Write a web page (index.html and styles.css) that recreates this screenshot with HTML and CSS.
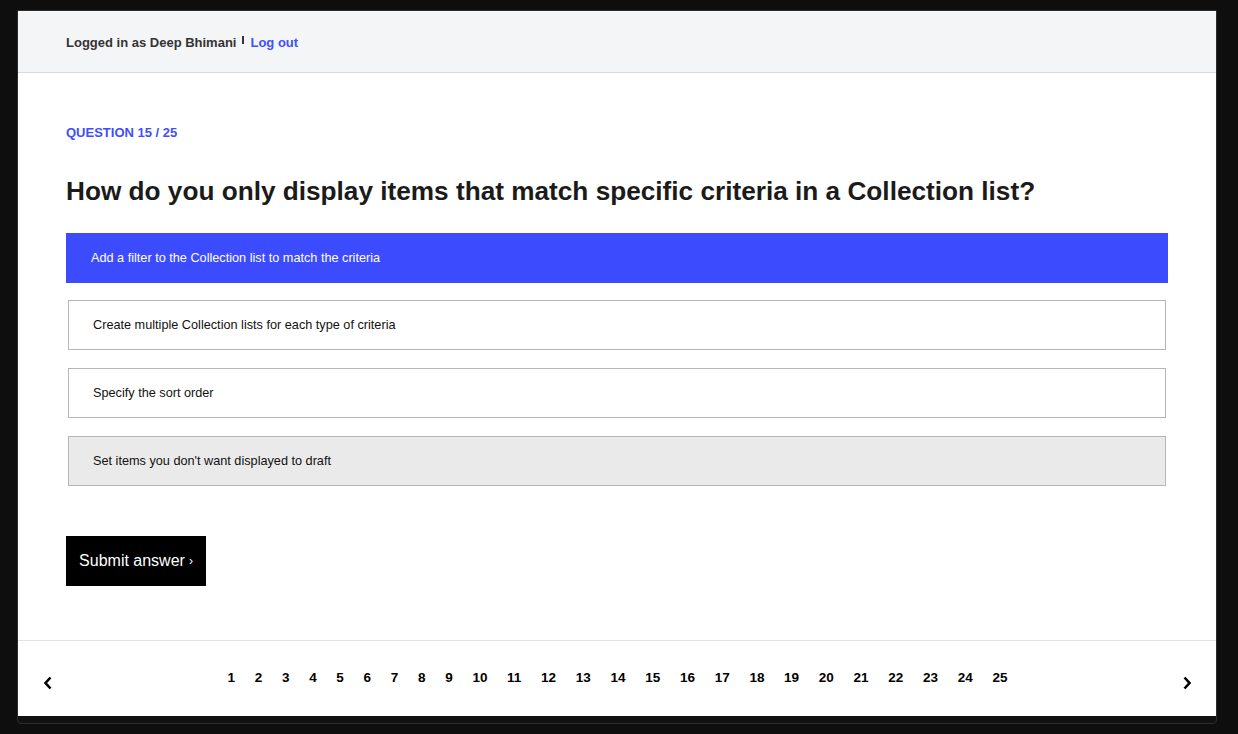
FILE: index.html
```html
<!DOCTYPE html>
<html>
<head>
<meta charset="utf-8">
<link rel="stylesheet" href="styles.css">
</head>
<body>
<div class="window">
  <header class="topbar">
    <span class="user">Logged in as Deep Bhimani</span>
    <span class="sep"></span>
    <a class="logout" href="#">Log out</a>
  </header>
  <main class="quiz">
    <div class="qlabel">QUESTION 15 / 25</div>
    <h1 class="qtitle">How do you only display items that match specific criteria in a Collection list?</h1>
    <div class="options">
      <div class="option selected">Add a filter to the Collection list to match the criteria</div>
      <div class="option">Create multiple Collection lists for each type of criteria</div>
      <div class="option">Specify the sort order</div>
      <div class="option hover">Set items you don't want displayed to draft</div>
    </div>
    <button class="submit">Submit answer <span class="chev">›</span></button>
  </main>
  <footer class="pager">
    <span class="arrow"><svg width="10" height="14" viewBox="0 0 10 14"><polyline points="7.5,1.5 2.5,7 7.5,12.5" fill="none" stroke="#000" stroke-width="2.6"/></svg></span>
    <div class="pages">
      <span>1</span><span>2</span><span>3</span><span>4</span><span>5</span><span>6</span><span>7</span><span>8</span><span>9</span><span>10</span><span>11</span><span>12</span><span>13</span><span>14</span><span>15</span><span>16</span><span>17</span><span>18</span><span>19</span><span>20</span><span>21</span><span>22</span><span>23</span><span>24</span><span>25</span>
    </div>
    <span class="arrow"><svg width="10" height="14" viewBox="0 0 10 14"><polyline points="2.5,1.5 7.5,7 2.5,12.5" fill="none" stroke="#000" stroke-width="2.6"/></svg></span>
  </footer>
</div>
</body>
</html>
```

FILE: styles.css
```css
html, body {
  margin: 0;
  padding: 0;
  background: #0e0e0e;
  font-family: "Liberation Sans", Arial, sans-serif;
}
body {
  padding: 10px 0 0 17px;
  height: 734px;
  box-sizing: border-box;
}
.window {
  width: 1200px;
  box-sizing: border-box;
  border: 1px solid #2c2c2c;
  border-radius: 0 0 4px 4px;
  background: #111;
  padding-bottom: 7px;
}
.topbar {
  height: 60px;
  padding-top: 1px;
  background: #f4f5f7;
  border-bottom: 1px solid #d9d9d9;
  display: flex;
  align-items: center;
  padding-left: 48px;
  font-size: 13px;
  font-weight: bold;
  box-sizing: content-box;
}
.user { color: #333; }
.sep {
  display: inline-block;
  width: 2px;
  height: 8px;
  background: #333;
  margin: 0 6px 4px 6px;
}
.logout {
  color: #3f51ff;
  text-decoration: none;
}
.quiz {
  background: #fff;
  padding: 52px 48px 54px 48px;
}
.qlabel {
  color: #3f4eff;
  font-size: 13px;
  font-weight: bold;
  line-height: 16px;
}
.qtitle {
  margin: 34px 0 0 0;
  font-size: 26.2px;
  line-height: 32px;
  font-weight: bold;
  color: #1b1b1b;
}
.options {
  width: 1102px;
  margin-top: 26px;
  display: flex;
  flex-direction: column;
  gap: 18px;
}
.option {
  height: 50px;
  box-sizing: border-box;
  display: flex;
  align-items: center;
  padding-left: 24px;
  margin: 0 2px;
  border: 1px solid #b5b5b5;
  font-size: 12.7px;
  color: #111;
  background: #fff;
}
.option.selected {
  margin: 0 0 -1px 0;
  border: none;
  padding-left: 25px;
  background: #3d4bff;
  color: #fff;
}
.option.hover {
  background: #eaeaea;
}
.submit {
  margin-top: 50px;
  width: 140px;
  height: 50px;
  border: none;
  background: #000;
  color: #fff;
  font-family: "Liberation Sans", Arial, sans-serif;
  font-size: 16px;
  padding: 0;
  display: flex;
  align-items: center;
  justify-content: center;
}
.chev {
  font-size: 12px;
  margin-left: 4px;
}
.pager {
  background: #fff;
  border-top: 1px solid #dde3e6;
  height: 75px;
  display: flex;
  align-items: center;
  padding: 0 24px 0 25px;
}
.arrow {
  display: flex;
  padding-top: 8px;
}
.pages {
  flex: 1;
  display: flex;
  justify-content: center;
  gap: 19.7px;
  font-size: 13.5px;
  font-weight: bold;
  color: #000;
  padding: 0 0 2px 0;
}
```
